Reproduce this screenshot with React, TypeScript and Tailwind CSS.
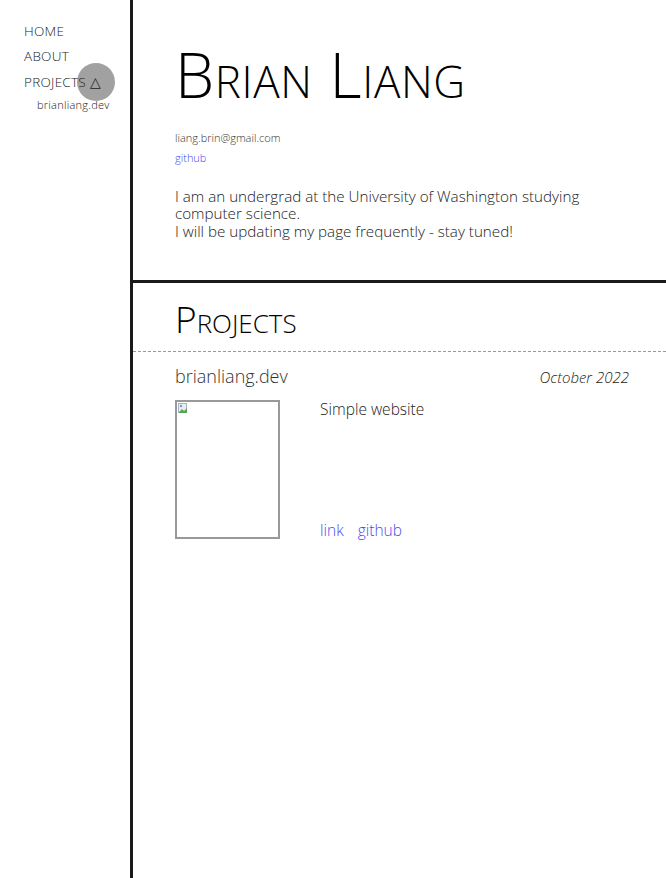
import React from "react";

const font = { fontFamily: '"Open Sans", "Noto Sans", sans-serif' };

function BrokenImage() {
  return (
    <svg width="10" height="11" viewBox="0 0 10 11" className="absolute left-[1px] top-[1px]">
      <rect x="0.5" y="0.5" width="8" height="9" fill="#e8eef5" stroke="#a6b4c6" />
      <path d="M1 9 L4 6 L6 8 L9 5 V10 H1 Z" fill="#5aa552" />
      <circle cx="3" cy="3" r="1.2" fill="#7a9bd0" />
    </svg>
  );
}

export default function App() {
  return (
    <div className="flex min-h-[878px] w-full bg-white font-light text-[#222]" style={font}>
      <nav className="w-[133px] shrink-0 border-r-[3px] border-[#1a1a1a] pt-[19px]">
        <ul className="flex flex-col pl-6 text-[13.5px] leading-[25px] tracking-[0.02em] text-[#222]">
          <li>HOME</li>
          <li>ABOUT</li>
          <li className="relative mt-[1px]">
            <span className="absolute left-[53px] top-[-7px] h-[38px] w-[38px] rounded-full bg-[#8a8a8a]/80" />
            <span className="relative">PROJECTS &#9651;</span>
          </li>
          <li className="pl-[13px] text-[11px] leading-[20px]">brianliang.dev</li>
        </ul>
      </nav>
      <main className="flex min-w-0 flex-1 flex-col">
        <header className="h-[283px] border-b-[3px] border-[#1a1a1a] pl-[42px] pt-[38px]">
          <h1 className="text-[62.5px] font-light leading-[72px] tracking-[0.01em] text-black [font-variant:small-caps]">
            Brian Liang
          </h1>
          <p className="mt-[20px] text-[11px] leading-[16px] text-[#333]">liang.brin@gmail.com</p>
          <a className="mt-[4px] block text-[11px] leading-[16px] text-[#4a4af0]">github</a>
          <p className="mt-[22px] text-[15.2px] leading-[17.3px] text-[#222]">
            I am an undergrad at the University of Washington studying
            <br />
            computer science.
            <br />I will be updating my page frequently - stay tuned!
          </p>
        </header>
        <section>
          <div className="border-b border-dashed border-[#999] pb-[11px] pl-[42px] pt-[15px]">
            <h2 className="text-[37px] font-light leading-[42px] text-black [font-variant:small-caps]">Projects</h2>
          </div>
          <div className="pl-[42px] pr-[37px] pt-[12px]">
            <div className="flex items-baseline justify-between">
              <h3 className="text-[18px] leading-[24px] text-[#333]">brianliang.dev</h3>
              <span className="text-[15px] italic text-[#222]">October 2022</span>
            </div>
            <div className="mt-[11px] flex gap-[40px]">
              <div className="relative h-[139px] w-[105px] shrink-0 border-2 border-[#999]">
                <BrokenImage />
              </div>
              <div className="flex h-[139px] flex-col justify-between">
                <p className="text-[15.5px] leading-[18px] text-[#222]">Simple website</p>
                <div className="flex gap-[14px] text-[15.5px] leading-[18px] text-[#4a4af0]">
                  <a>link</a>
                  <a>github</a>
                </div>
              </div>
            </div>
          </div>
        </section>
      </main>
    </div>
  );
}
